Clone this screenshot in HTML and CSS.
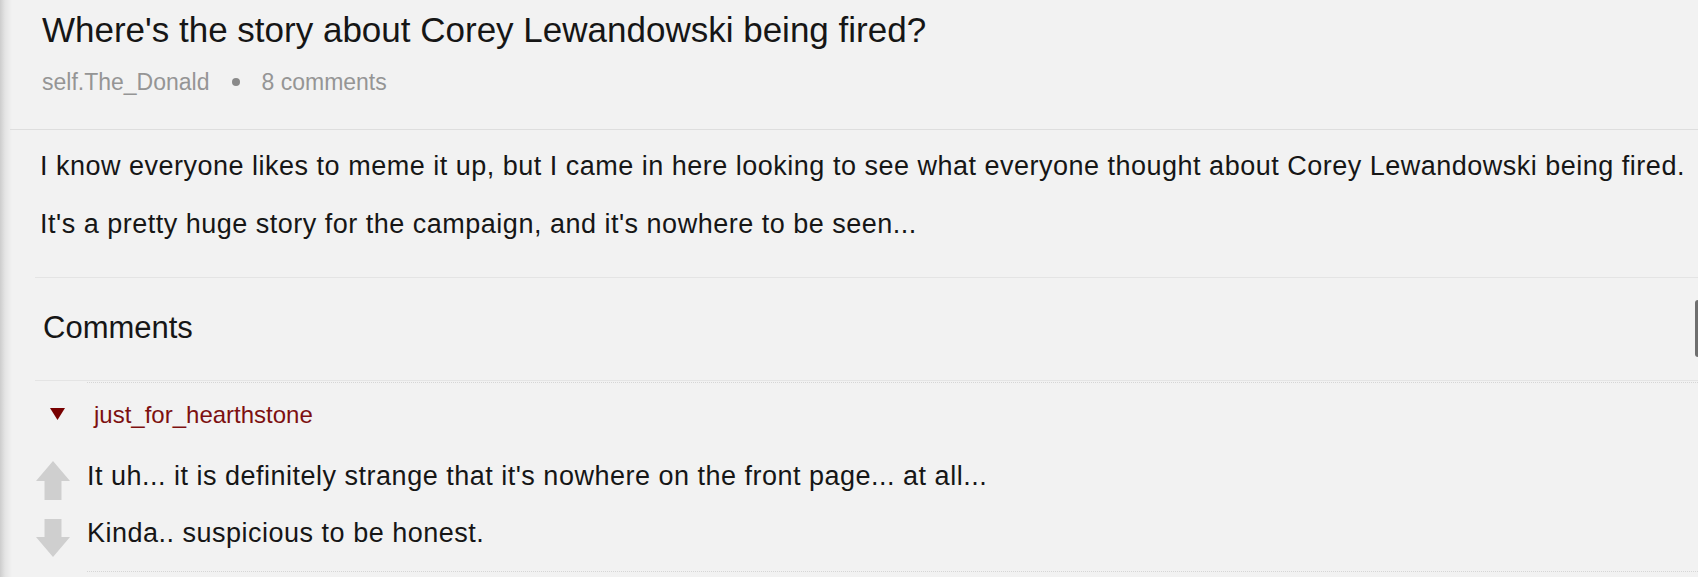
FILE: index.html
```html
<!DOCTYPE html>
<html lang="en">
<head>
  <meta charset="UTF-8">
  <title>Where's the story about Corey Lewandowski being fired?</title>
  <link rel="stylesheet" href="styles.css">
</head>
<body>

<header class="post-head">
  <h1 class="post-title">Where's the story about Corey Lewandowski being fired?</h1>
  <div class="post-meta">
    <span>self.The_Donald</span>
    <span class="dot"></span>
    <span>8 comments</span>
  </div>
</header>

<div class="post-body">
  <p>I know everyone likes to meme it up, but I came in here looking to see what everyone thought about Corey Lewandowski being fired.</p>
  <p>It's a pretty huge story for the campaign, and it's nowhere to be seen...</p>
</div>

<section class="comments">
  <h2 class="comments-title">Comments</h2>

  <div class="comment">
    <div class="comment-rule"></div>
    <div class="comment-author">
      <svg class="collapse" width="15" height="12" viewBox="0 0 15 12"><polygon points="0,0 15,0 7.5,12"/></svg>
      <span>just_for_hearthstone</span>
    </div>
    <div class="votes">
      <svg width="34" height="39" viewBox="0 0 34 39"><polygon points="17,0 34,20 25.5,20 25.5,39 8.5,39 8.5,20 0,20"/></svg>
      <svg width="34" height="38" viewBox="0 0 34 38"><polygon points="8.5,0 25.5,0 25.5,18 34,18 17,38 0,18 8.5,18"/></svg>
    </div>
    <div class="comment-text">
      <p>It uh... it is definitely strange that it's nowhere on the front page... at all...</p>
      <p>Kinda.. suspicious to be honest.</p>
    </div>
  </div>
</section>

<div class="edge-tab"></div>

</body>
</html>
```

FILE: styles.css
```css
* {
  box-sizing: border-box;
}
body {
  margin: 0;
  height: 100vh;
  overflow: hidden;
  position: relative;
  font-family: 'Liberation Sans', Arial, sans-serif;
  color: #161616;
  background: linear-gradient(to right, #cdcdcd 0, #e4e4e4 5px, #f2f2f2 12px);
}

/* Post header */
.post-head {
  margin-left: 10px;
  padding: 10px 0 33px 32px;
  border-bottom: 1px solid #dedede;
}

.post-title {
  margin: 0;
  font-size: 35px;
  font-weight: normal;
  line-height: 40px;
}

.post-meta {
  display: flex;
  align-items: center;
  gap: 22px;
  margin-top: 18px;
  font-size: 23px;
  line-height: 28px;
  color: #959595;
}

.dot {
  width: 8px;
  height: 8px;
  border-radius: 50%;
  background: #8a8a8a;
}

/* Post text */
.post-body {
  padding: 19px 0 36px 40px;
  font-size: 27px;
  line-height: 34px;
  letter-spacing: 0.5px;
}

.post-body p, .comment-text p {
  margin: 0;
  white-space: nowrap;
}

.post-body p + p {
  margin-top: 24px;
}

/* Comments */
.comments {
  margin-left: 35px;
  border-top: 1px solid #e4e4e4;
}

.comments-title {
  margin: 0;
  padding: 32px 0 34px 8px;
  font-size: 31px;
  font-weight: normal;
  line-height: 36px;
  border-bottom: 1px solid #e4e4e4;
}

.comment {
  display: grid;
  grid-template-columns: 52px 1fr;
  margin-top: 1px;
}

.comment-rule {
  grid-column: 2;
  border-top: 1px dotted #d6d6d6;
}

.comment-author {
  grid-column: 1 / -1;
  display: flex;
  align-items: flex-start;
  padding: 18px 0 0 15px;
  font-size: 24px;
  line-height: 28px;
  color: #7d1010;
}

.collapse {
  margin: 7px 29px 0 0;
  fill: #780000;
}

.votes {
  display: flex;
  flex-direction: column;
  gap: 19px;
  margin-top: 32px;
  padding-left: 1px;
  fill: #cfcfcf;
}

.comment-text {
  margin-top: 30px;
  padding-bottom: 21px;
  border-bottom: 1px dotted #d6d6d6;
  font-size: 27px;
  line-height: 34px;
  letter-spacing: 0.5px;
}

.comment-text p + p {
  margin-top: 23px;
}

.edge-tab {
  position: absolute;
  top: 300px;
  right: 0;
  width: 3px;
  height: 57px;
  background: #6f6f6f;
  border-radius: 4px 0 0 4px;
}
```
